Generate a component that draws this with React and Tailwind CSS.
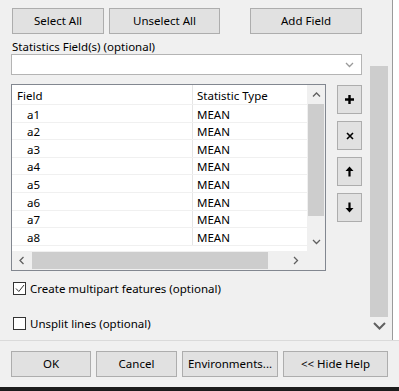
import React from 'react';

const rows = ['a1', 'a2', 'a3', 'a4', 'a5', 'a6', 'a7', 'a8'];

function Btn({ children, className = '' }) {
  return (
    <button className={`h-[26px] bg-[#e1e1e1] border border-[#adadad] text-[11.5px] text-black flex items-center justify-center ${className}`}>
      {children}
    </button>
  );
}

function SideBtn({ children }) {
  return (
    <button className="w-[25px] h-[29px] bg-[#e1e1e1] border border-[#adadad] flex items-center justify-center">
      {children}
    </button>
  );
}

function Chevron({ dir = 'down', className = '' }) {
  const d = {
    down: 'M1 1 L4.5 4.5 L8 1',
    up: 'M1 4.5 L4.5 1 L8 4.5',
    left: 'M4.5 1 L1 4.5 L4.5 8',
    right: 'M1 1 L4.5 4.5 L1 8',
  }[dir];
  const w = dir === 'left' || dir === 'right' ? 6 : 9;
  const h = dir === 'left' || dir === 'right' ? 9 : 6;
  return (
    <svg width={w} height={h} viewBox={`0 0 ${w} ${h}`} className={className}>
      <path d={d} fill="none" stroke="currentColor" strokeWidth="1.3" />
    </svg>
  );
}

export default function App() {
  return (
    <div className="w-[399px] h-[391px] bg-[#f0f0f0] flex flex-col overflow-hidden font-['Noto_Sans',sans-serif] text-[11.5px] text-black">
      <div className="flex flex-row h-[340px]">
        {/* main content */}
        <div className="w-[370px] pl-[11px] pt-[8px] flex flex-col">
          <div className="flex flex-row">
            <Btn className="ml-[1px] w-[92px]">Select All</Btn>
            <Btn className="ml-[5px] w-[111px]">Unselect All</Btn>
            <Btn className="ml-[30px] w-[112px]">Add Field</Btn>
          </div>
          <p className="mt-[6px] ml-[1px] leading-[14px]">Statistics Field(s) (optional)</p>
          <div className="w-[351px] h-[21px] bg-white border border-[#b4b4b4] flex items-center justify-end pr-[7px]">
            <Chevron dir="down" className="text-[#9a9a9a]" />
          </div>

          <div className="mt-[9px] flex flex-row">
            {/* table */}
            <div className="w-[315px] h-[187px] border border-[#828790] bg-white flex flex-col">
              <div className="flex flex-row h-[166px]">
                <div className="w-[295px] flex flex-col">
                  <div className="flex flex-row h-[20px] border-b border-[#f0f0f0]">
                    <div className="w-[181px] pl-[5px] pt-[2px] h-full flex items-center border-r border-[#e5e5e5]">Field</div>
                    <div className="pl-[4px] pt-[2px] flex items-center">Statistic Type</div>
                  </div>
                  {rows.map((r) => (
                    <div key={r} className="flex flex-row h-[17.6px] border-b border-[#f0f0f0]">
                      <div className="w-[181px] pl-[15px] pt-[2px] h-full flex items-center border-r border-[#e5e5e5]">{r}</div>
                      <div className="pl-[4px] pt-[2px] flex items-center">MEAN</div>
                    </div>
                  ))}
                </div>
                {/* vertical scrollbar */}
                <div className="w-[18px] bg-[#f0f0f0] flex flex-col">
                  <div className="h-[19px] flex items-center justify-center text-[#606060]">
                    <Chevron dir="up" />
                  </div>
                  <div className="h-[112px] mx-[1px] bg-[#cdcdcd]"></div>
                  <div className="flex-1 flex items-end justify-center pb-[6px] text-[#606060]">
                    <Chevron dir="down" />
                  </div>
                </div>
              </div>
              {/* horizontal scrollbar */}
              <div className="flex-1 bg-[#f0f0f0] flex flex-row">
                <div className="w-[20px] flex items-center justify-center text-[#606060]">
                  <Chevron dir="left" />
                </div>
                <div className="w-[236px] my-[1px] bg-[#cdcdcd]"></div>
                <div className="w-[39px] flex items-center justify-end pr-[8px] text-[#606060]">
                  <Chevron dir="right" />
                </div>
              </div>
            </div>

            {/* side buttons */}
            <div className="ml-[11px] pt-[1px] flex flex-col gap-[7px]">
              <SideBtn>
                <svg width="11" height="11" viewBox="0 0 11 11">
                  <path d="M5.5 1 V10 M1 5.5 H10" stroke="#000" strokeWidth="2.4" />
                </svg>
              </SideBtn>
              <SideBtn>
                <svg width="8" height="8" viewBox="0 0 8 8">
                  <path d="M1 1 L7 7 M7 1 L1 7" stroke="#000" strokeWidth="1.6" />
                </svg>
              </SideBtn>
              <SideBtn>
                <svg width="9" height="11" viewBox="0 0 9 11">
                  <path d="M4.5 0.5 L8.5 5 H5.6 V10.5 H3.4 V5 H0.5 Z" fill="#000" />
                </svg>
              </SideBtn>
              <SideBtn>
                <svg width="9" height="11" viewBox="0 0 9 11">
                  <path d="M4.5 10.5 L8.5 6 H5.6 V0.5 H3.4 V6 H0.5 Z" fill="#000" />
                </svg>
              </SideBtn>
            </div>
          </div>

          <label className="mt-[9px] ml-[2px] flex flex-row items-center">
            <span className="w-[13px] h-[13px] border border-[#333] bg-white flex items-center justify-center">
              <svg width="10" height="9" viewBox="0 0 10 9">
                <path d="M1 4.5 L3.8 7.5 L9 1" fill="none" stroke="#333" strokeWidth="1" />
              </svg>
            </span>
            <span className="ml-[4px]">Create multipart features (optional)</span>
          </label>
          <label className="mt-[18px] ml-[2px] flex flex-row items-center">
            <span className="w-[13px] h-[13px] border border-[#333] bg-white"></span>
            <span className="ml-[4px]">Unsplit lines (optional)</span>
          </label>
        </div>

        {/* outer scrollbar */}
        <div className="w-[18px] flex flex-col">
          <div className="mt-[66px] h-[251px] bg-[#cdcdcd]"></div>
          <div className="flex-1 flex justify-center pt-[5px] text-[#606060]">
            <svg width="13" height="8" viewBox="0 0 13 8">
              <path d="M1 1 L6.5 6.5 L12 1" fill="none" stroke="currentColor" strokeWidth="2" />
            </svg>
          </div>
        </div>
        <div className="w-[4px]"></div>
        <div className="w-[1px] bg-[#9a9a9a]"></div>
        <div className="flex-1 bg-white"></div>
      </div>

      {/* bottom bar */}
      <div className="border-t border-[#dadada] flex-1 flex flex-col">
        <div className="mt-[10px] pl-[11px] flex flex-row gap-[5px]">
          <Btn className="w-[80px] border-[#0078d7]">OK</Btn>
          <Btn className="w-[81px]">Cancel</Btn>
          <Btn className="w-[96px]">Environments...</Btn>
          <Btn className="w-[105px]">&lt;&lt; Hide Help</Btn>
        </div>
        <div className="mt-auto h-[4px] bg-[#1c1c1c]"></div>
      </div>
    </div>
  );
}
